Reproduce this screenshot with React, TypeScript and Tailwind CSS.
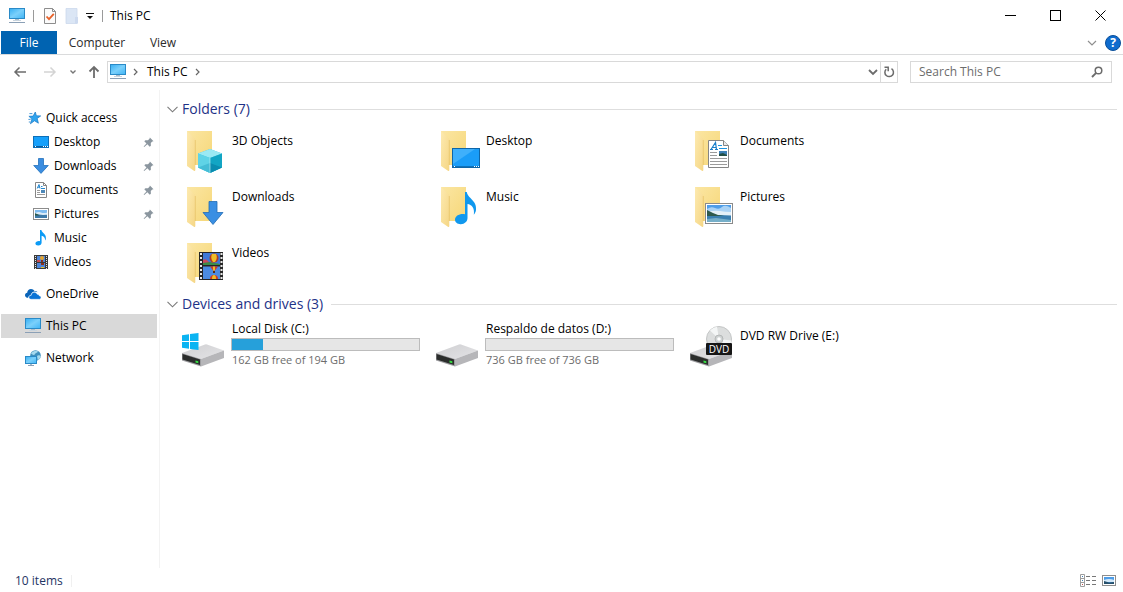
import React from 'react';

type IconProps = { className?: string };

interface NavItem {
  label: string;
  icon: React.FC<IconProps>;
  nested?: boolean;
  pinned?: boolean;
  active?: boolean;
  spaced?: boolean;
}

interface Drive {
  label: string;
  icon: React.FC<IconProps>;
  used?: number;
  detail?: string;
}

/* ---------- small icons (16px) ---------- */

const MonitorIcon: React.FC<IconProps> = ({ className }) => (
  <svg viewBox="0 0 16 16" className={className} aria-hidden="true">
    <defs>
      <linearGradient id="screen" x1="0" y1="0" x2="1" y2="1">
        <stop offset="0" stopColor="#35aef3" />
        <stop offset=".5" stopColor="#7bd0fb" />
        <stop offset="1" stopColor="#3fb4f5" />
      </linearGradient>
    </defs>
    <rect x="0.5" y="0.5" width="15" height="10" fill="url(#screen)" stroke="#2a8ac7" />
    <rect x="6" y="11" width="4" height="1" fill="#a9bccb" />
    <rect x="4" y="12" width="8" height="1" fill="#c8d4de" />
    <rect x="0" y="14" width="16" height="1" fill="#8ba0b6" />
  </svg>
);

const StarIcon: React.FC<IconProps> = ({ className }) => (
  <svg viewBox="0 0 16 16" className={className} aria-hidden="true">
    <path d="M10.3 2l1.1 3.800 4.300.1-3.500 2.600 1.200 4.700-3.900-2.400-4.100 3 1.500-4.700-3-2.800 4.200-.2z" fill="#2fa4ee" stroke="#1a79c6" strokeWidth=".7" />
    <path d="M4.4 3.600h3M3.400 9.400h2.200M3.800 12h1.600" stroke="#4b9ad6" strokeWidth="1" />
  </svg>
);

const DesktopIcon: React.FC<IconProps> = ({ className }) => (
  <svg viewBox="0 0 16 16" className={className} aria-hidden="true">
    <rect x="0.5" y="2.5" width="15" height="11" fill="#16a0fb" stroke="#0d6fb8" />
    <path d="M1 12.5h14" stroke="#0a5c9c" />
    <path d="M2 12.5h1M10 12.5h1M12 12.5h1M14 12.5h1" stroke="#fff" />
  </svg>
);

const DownloadIcon: React.FC<IconProps> = ({ className }) => (
  <svg viewBox="0 0 16 16" className={className} aria-hidden="true">
    <path d="M5.5.5h5v7h4.800L8 15.400.7 7.500h4.800z" fill="#3b8de0" stroke="#2372bd" strokeWidth=".8" />
  </svg>
);

const DocumentIcon: React.FC<IconProps> = ({ className }) => (
  <svg viewBox="0 0 16 16" className={className} aria-hidden="true">
    <path d="M2.500.500h8l3 3v12h-11z" fill="#fff" stroke="#868686" />
    <path d="M10.500.500v3h3" fill="none" stroke="#868686" />
    <path d="M4.200 6.500L6 2.500l1 4M4.800 5.200h2M8 4.500h1.500M8 6.500h4" stroke="#2487cf" fill="none" />
    <path d="M4 8.500h3M4 10.500h3M4 12.500h8" stroke="#9a9a9a" />
    <rect x="8" y="8" width="4" height="3" fill="#4c87b8" />
  </svg>
);

const PictureIcon: React.FC<IconProps> = ({ className }) => (
  <svg viewBox="0 0 16 16" className={className} aria-hidden="true">
    <rect x="0.5" y="2.5" width="15" height="11" fill="#fff" stroke="#8c8c8c" />
    <rect x="2" y="4" width="12" height="8" fill="#7fbcf0" />
    <path d="M2 7q4-1.500 6-.5t6 .2V9H2z" fill="#dcecf8" />
    <path d="M2 7.500l4 1 4 .6 4-.3V12H2z" fill="#3d79a8" />
    <path d="M2 7.200l5 2.200H2z" fill="#2d5b45" />
  </svg>
);

const MusicIcon: React.FC<IconProps> = ({ className }) => (
  <svg viewBox="0 0 16 16" className={className} aria-hidden="true">
    <path d="M7 0h1.400c.2 2.800 5 3.600 4.500 8.500-.1.9-.4 1.500-.8 2.100.3-2.700-1.500-4.300-3.500-4.800v6.900c0 1.500-1.300 2.800-3.300 2.900-1.700.1-2.900-.7-2.900-2 0-1.600 2.200-2.900 4.600-2.400z" fill="#0c9bf5" />
  </svg>
);

const VideoIcon: React.FC<IconProps> = ({ className }) => (
  <svg viewBox="0 0 16 16" className={className} aria-hidden="true">
    <rect x="1" y="1" width="14" height="14" fill="#3a3a3a" />
    <rect x="4" y="2" width="8" height="6" fill="#4f86d8" />
    <rect x="4" y="9" width="8" height="5" fill="#4f86d8" />
    <path d="M4 6h3v2H4z" fill="#c74a4e" />
    <circle cx="9" cy="4" r="2" fill="#e8a52c" />
    <path d="M8 6h2v2H8zM8 9h3v2H8z" fill="#8c2f1b" />
    <path d="M8 13h3v1H8z" fill="#e8c22c" />
    <path d="M2.500 2v13M13.500 2v13" stroke="#e6e6e6" strokeDasharray="1 1" />
  </svg>
);

const OneDriveIcon: React.FC<IconProps> = ({ className }) => (
  <svg viewBox="0 0 16 16" className={className} aria-hidden="true">
    <path d="M3.200 11.800C1.200 11.800 0 10.700 0 9.200c0-1.400 1-2.300 2.200-2.500C2.300 4.500 4 3 6 3c1.500 0 2.800.8 3.500 2 1.500-.2 2.500.3 3 1.200C9.500 4.800 6.500 6 6.100 8.700c-1.700.3-2.600 1.700-2.900 3.100z" fill="#0a64b8" />
    <path d="M6.200 13.300c-1.400 0-2.300-.9-2.300-2 0-1.200 1-2.100 2.300-2C6.300 7.500 7.600 6.300 9.200 6.300c1.300 0 2.400.7 2.900 1.900 1.300-.1 2 .7 2.100 1.600 1.100 0 1.800.7 1.800 1.700s-.8 1.800-1.900 1.800z" fill="#0a74d6" stroke="#fff" strokeWidth=".5" />
  </svg>
);

const NetworkIcon: React.FC<IconProps> = ({ className }) => (
  <svg viewBox="0 0 16 16" className={className} aria-hidden="true">
    <circle cx="10.500" cy="5.500" r="5.300" fill="#3f8fbd" />
    <path d="M6 3.500c2-3 5.500-3.500 7-2-.2 1.500-2.500 1-3 2.500S7.500 5 6 3.500zM12 6c1.500-1.500 3-.5 3.600 0-.2 2-1.300 3.500-2.800 4.300z" fill="#a6d9ee" />
    <rect x="0.500" y="6.500" width="11" height="7" fill="url(#screen)" stroke="#2a8ac7" />
    <path d="M3 15.500h6" stroke="#8ba0b6" />
    <path d="M6 14v1" stroke="#a9bccb" strokeWidth="2" />
  </svg>
);

const PinIcon: React.FC<IconProps> = ({ className }) => (
  <svg viewBox="0 0 12 12" className={className} aria-hidden="true">
    <path d="M7.500.500l4 4-1.400.4-1.600 1.700.1 2.900-1.300 1-2.500-2.500L1.300 11l-.6-.6L3.800 7.100 1.400 4.700l1.200-1.100 2.800-.1 1.700-1.700z" fill="#8b969f" />
  </svg>
);

/* ---------- folder tiles (48px) ---------- */

const Folder: React.FC<{ children: React.ReactNode }> = ({ children }) => (
  <svg viewBox="0 0 48 48" className="size-12 shrink-0" aria-hidden="true">
    <defs>
      <linearGradient id="folderBack" x1="0" y1="0" x2="1" y2="1">
        <stop offset="0" stopColor="#fbe6a3" />
        <stop offset="1" stopColor="#f6d778" />
      </linearGradient>
      <linearGradient id="folderFlap" x1="0" y1="0" x2="1" y2="1">
        <stop offset="0" stopColor="#fdeab0" />
        <stop offset="1" stopColor="#f5d685" />
      </linearGradient>
    </defs>
    <path d="M9 3h25v34H9z" fill="url(#folderBack)" />
    <path d="M9 3l7.500 7c.6.6.8 1.200.8 2v30c0 1-.6 1.400-1.400.8L9 38z" fill="url(#folderFlap)" />
    <path d="M17.300 12v25" stroke="#e5c065" strokeWidth=".7" />
    {children}
  </svg>
);

const CubeArt = () => (
  <>
    <path d="M32 21l12 4.500v14L32 45l-12-5.500v-14z" fill="#3ec4dd" />
    <path d="M32 21l12 4.500L32 30l-12-4.500z" fill="#9be9f3" />
    <path d="M20 25.500L32 30v15l-12-5.500z" fill="#5fd3e6" />
    <path d="M32 30l12-4.500v14L32 45z" fill="#12a5c4" />
    <path d="M20 39.500L32 35v10z" fill="#45bdd6" />
    <path d="M32 35l12 4.500L32 45z" fill="#0a8cb0" />
    <path d="M32 30v15" stroke="#c9f4fa" strokeWidth=".6" />
  </>
);

const DesktopArt = () => (
  <>
    <rect x="20.500" y="20.500" width="27" height="19" fill="#1a9df8" stroke="#0e66a8" />
    <path d="M21 36V21h22z" fill="#3fb0fb" />
    <path d="M21 38.500h26" stroke="#0e72ba" />
    <path d="M22 38.500h1M42 38.500h1M44 38.500h1M46 38.500h1" stroke="#fff" />
  </>
);

const DocumentArt = () => (
  <>
    <path d="M22.500 12.500h15l5 5v22h-20z" fill="#fff" stroke="#858585" />
    <path d="M37.500 12.500v5h5" fill="#e9e9e9" stroke="#858585" />
    <path d="M25 21.500l4.500-7 1 7M26.500 19.500h4M24 21.500h3M29 21.500h3" stroke="#1b7fc9" strokeWidth="1.200" fill="none" />
    <path d="M32 17.500h4M33 20.500h8" stroke="#1b94e0" />
    <path d="M24 24.500h7M24 27.500h7M24 30.500h17M24 33.500h17M24 36.500h17" stroke="#9b9b9b" />
    <rect x="33" y="23" width="8" height="5" fill="#3d7fb5" />
    <path d="M33 26l4-1 4 2v1h-8z" fill="#244f45" />
  </>
);

const DownloadArt = () => (
  <path d="M31 17.500h8v11h6L35 40.500l-10-12h6z" fill="#3a8fe3" stroke="#226cb5" strokeWidth=".8" />
);

const MusicArt = () => (
  <path d="M33 8h1.800c.5 6 10.500 8.500 9.200 18-.3 2-1 3.400-2.200 4.800C43 24 39.500 20.500 35.500 20v14c0 3.500-2.800 6-6.700 6.200-3.300.1-5.800-1.700-5.800-4.600 0-3.600 4.500-6.300 10-5.400z" fill="#1098ee" />
);

const PictureArt = () => (
  <>
    <rect x="19.500" y="19.500" width="27" height="20" fill="#fff" stroke="#8a8a8a" />
    <rect x="21" y="21" width="24" height="17" fill="#4e9de8" />
    <path d="M21 25q4-3 8-1t7-1 9 1v7H21z" fill="#a9d2f5" />
    <path d="M21 28q8-2 13-1t11 1v4H21z" fill="#e4f0f8" />
    <path d="M21 31.500l12-.5 12 .5V38H21z" fill="#3a7fb0" />
    <path d="M21 26l6 3 5 2 6 1H21z" fill="#2e5a4c" />
    <path d="M21 35l9-1 15 2v2H21z" fill="#76afc9" />
  </>
);

const VideoArt = () => (
  <>
    <rect x="21" y="12" width="24" height="28" fill="#262626" />
    <rect x="25" y="13" width="17" height="12" fill="#3f78d6" />
    <rect x="25" y="26.500" width="17" height="12.500" fill="#4b8be2" />
    <path d="M25 20q3-2 5 1t5 0v4H25z" fill="#c8485d" />
    <path d="M25 23l7-1 10 2v1H25z" fill="#3b8d48" />
    <circle cx="36" cy="18" r="4.500" fill="#b33b23" />
    <path d="M34 14q-2 4 1 8h2q3-4 1-8z" fill="#f0bd25" />
    <path d="M32 26.500h8l-3 4h-2z" fill="#cf3d25" />
    <path d="M35 26.500h2v4h-2z" fill="#f0bd25" />
    <path d="M35 31h2v2h-2z" fill="#522a16" />
    <path d="M32 39q0-4 4-4t4 4z" fill="#cf3d25" />
    <path d="M34 39q0-4 2-4t2 4z" fill="#f0bd25" />
    <path d="M23 13v27M43.500 13v27" stroke="#e8e8e8" strokeWidth="2" strokeDasharray="2 2" />
  </>
);

/* ---------- drives (48px) ---------- */

const DriveBody = () => (
  <>
    <defs>
      <linearGradient id="driveTop" x1="0" y1="0" x2="1" y2="1">
        <stop offset="0" stopColor="#cfcfd2" />
        <stop offset="1" stopColor="#e4e4e6" />
      </linearGradient>
    </defs>
    <path d="M4 31l23-8.500q1-.4 2 0l17 6L23 37z" fill="url(#driveTop)" />
    <path d="M23 37l23-8.500v7.500l-23 8.500z" fill="#b6b6b9" />
    <path d="M4 31l19 6v7.500L4 38.500z" fill="#9c9c9f" />
    <path d="M4.500 32l17.500 5.400v5.600L4.500 37.600z" fill="#2b2d2c" />
    <path d="M17.500 38.400l2.800.8v2l-2.800-.8z" fill="#37e043" />
  </>
);

const SystemDriveIcon: React.FC<IconProps> = ({ className }) => (
  <svg viewBox="0 0 48 48" className={className} aria-hidden="true">
    <DriveBody />
    <path d="M4 13.300l7-1v6.700H4zM12 12.100l8.500-1.200V19H12zM4 20h7v6.700l-7-1zM12 20h8.500v8.100L12 26.900z" fill="#0bb4f2" />
  </svg>
);

const DataDriveIcon: React.FC<IconProps> = ({ className }) => (
  <svg viewBox="0 0 48 48" className={className} aria-hidden="true">
    <DriveBody />
  </svg>
);

const DvdDriveIcon: React.FC<IconProps> = ({ className }) => (
  <svg viewBox="0 0 48 48" className={className} aria-hidden="true">
    <DriveBody />
    <circle cx="33" cy="17" r="12.500" fill="#dcdede" stroke="#c4c6c6" />
    <path d="M33 17L24 8.500A12.500 12.500 0 0 1 31 4.700zM33 17l9 8.500a12.500 12.500 0 0 0 3.300-7z" fill="#f4f6f6" />
    <circle cx="33" cy="17" r="4" fill="#cfd3d3" stroke="#b5b8b8" />
    <circle cx="33" cy="17" r="1.800" fill="#fff" />
    <rect x="20" y="21" width="26" height="12" rx="1" fill="#161616" />
    <text x="33" y="31" textAnchor="middle" fontSize="10" fill="#fff" fontFamily="Open Sans, sans-serif">DVD</text>
  </svg>
);

/* ---------- data ---------- */

const navItems: NavItem[] = [
  { label: 'Quick access', icon: StarIcon },
  { label: 'Desktop', icon: DesktopIcon, nested: true, pinned: true },
  { label: 'Downloads', icon: DownloadIcon, nested: true, pinned: true },
  { label: 'Documents', icon: DocumentIcon, nested: true, pinned: true },
  { label: 'Pictures', icon: PictureIcon, nested: true, pinned: true },
  { label: 'Music', icon: MusicIcon, nested: true },
  { label: 'Videos', icon: VideoIcon, nested: true },
  { label: 'OneDrive', icon: OneDriveIcon, spaced: true },
  { label: 'This PC', icon: MonitorIcon, spaced: true, active: true },
  { label: 'Network', icon: NetworkIcon, spaced: true },
];

const folders = [
  { label: '3D Objects', art: CubeArt },
  { label: 'Desktop', art: DesktopArt },
  { label: 'Documents', art: DocumentArt },
  { label: 'Downloads', art: DownloadArt },
  { label: 'Music', art: MusicArt },
  { label: 'Pictures', art: PictureArt },
  { label: 'Videos', art: VideoArt },
];

const drives: Drive[] = [
  { label: 'Local Disk (C:)', icon: SystemDriveIcon, used: 16.5, detail: '162 GB free of 194 GB' },
  { label: 'Respaldo de datos (D:)', icon: DataDriveIcon, used: 0, detail: '736 GB free of 736 GB' },
  { label: 'DVD RW Drive (E:)', icon: DvdDriveIcon },
];

/* ---------- window parts ---------- */

const TitleBar = () => (
  <header className="flex h-[31px] items-center pl-[9px]">
    <MonitorIcon className="size-4" />
    <span className="ml-2 h-3 w-px bg-[#9a9a9a]" />
    <button type="button" aria-label="Properties" className="ml-2">
      <svg viewBox="0 0 16 16" className="size-4" aria-hidden="true">
        <path d="M2.500.500h8l3 3v12h-11z" fill="#fbfbfb" stroke="#8d8d8d" />
        <path d="M10.500.500v3h3" fill="none" stroke="#8d8d8d" />
        <path d="M4.500 8.500l2.500 2.700 4.800-5.400" fill="none" stroke="#e8622a" strokeWidth="1.800" />
      </svg>
    </button>
    <button type="button" aria-label="New folder" className="ml-[6px]">
      <svg viewBox="0 0 16 16" className="size-4" aria-hidden="true">
        <path d="M2 .500h11v15H2z" fill="#dbe6f5" stroke="#cbd8ec" strokeWidth=".8" />
        <path d="M11 9h3v6.500h-3z" fill="#cddaef" />
      </svg>
    </button>
    <button type="button" aria-label="Customize Quick Access Toolbar" className="ml-[6px]">
      <svg viewBox="0 0 8 8" className="size-2" aria-hidden="true">
        <path d="M0 1.500h8" stroke="#111" />
        <path d="M1 4h6L4 7z" fill="#111" />
      </svg>
    </button>
    <span className="ml-2 h-3 w-px bg-[#9a9a9a]" />
    <h1 className="ml-[7px] leading-4">This PC</h1>
    <div className="ml-auto flex">
      <button type="button" aria-label="Minimize" className="flex h-[31px] w-[46px] items-center justify-center">
        <svg viewBox="0 0 11 11" className="size-[11px]" aria-hidden="true">
          <path d="M0 5.500h11" stroke="#000" />
        </svg>
      </button>
      <button type="button" aria-label="Maximize" className="flex h-[31px] w-[45px] items-center justify-center">
        <svg viewBox="0 0 11 11" className="size-[11px]" aria-hidden="true">
          <rect x="0.500" y="0.500" width="10" height="10" fill="none" stroke="#000" />
        </svg>
      </button>
      <button type="button" aria-label="Close" className="flex h-[31px] w-[45px] items-center justify-center">
        <svg viewBox="0 0 11 11" className="size-[11px]" aria-hidden="true">
          <path d="M.500.500l10 10M10.500.500l-10 10" stroke="#000" />
        </svg>
      </button>
    </div>
  </header>
);

const Ribbon = () => (
  <div className="flex h-6 items-center border-b border-[#dadbdc] pl-px">
    <button type="button" className="h-[23px] w-14 bg-[#0063b1] text-white">File</button>
    <button type="button" className="w-20 text-[#2b2b2b]">Computer</button>
    <button type="button" className="w-[52px] text-[#2b2b2b]">View</button>
    <button type="button" aria-label="Expand the Ribbon" className="ml-auto">
      <svg viewBox="0 0 10 6" className="h-[6px] w-[10px]" aria-hidden="true">
        <path d="M1 1l4 4 4-4" fill="none" stroke="#8f8f8f" strokeWidth="1.200" />
      </svg>
    </button>
    <button type="button" aria-label="Help" className="mr-0.5 ml-2 flex size-4 items-center justify-center rounded-full border border-[#0a4f9a] bg-[#0f6cce] text-xs leading-4 font-bold text-white">
      ?
    </button>
  </div>
);

const Crumb = () => (
  <svg viewBox="0 0 5 8" className="h-2 w-[5px]" aria-hidden="true">
    <path d="M1 1l3 3-3 3" fill="none" stroke="#666" strokeWidth="1.200" />
  </svg>
);

const AddressRow = () => (
  <div className="flex items-center pt-[6px] pr-[11px] pl-[13px]">
    <button type="button" aria-label="Back">
      <svg viewBox="0 0 14 14" className="size-[14px]" aria-hidden="true">
        <path d="M13 7H2M6.500 2.500L2 7l4.500 4.500" fill="none" stroke="#6c6c6c" strokeWidth="1.500" />
      </svg>
    </button>
    <button type="button" aria-label="Forward" className="ml-4">
      <svg viewBox="0 0 14 14" className="size-[14px]" aria-hidden="true">
        <path d="M1 7h11M7.500 2.500L12 7l-4.500 4.500" fill="none" stroke="#d4d4d4" strokeWidth="1.500" />
      </svg>
    </button>
    <button type="button" aria-label="Recent locations" className="ml-[13px]">
      <svg viewBox="0 0 6 6" className="size-[6px]" aria-hidden="true">
        <path d="M.500 1.500L3 4l2.500-2.500" fill="none" stroke="#777" strokeWidth="1.400" />
      </svg>
    </button>
    <button type="button" aria-label="Up" className="ml-[11px]">
      <svg viewBox="0 0 14 14" className="size-[14px]" aria-hidden="true">
        <path d="M7 13V2M2.500 6.500L7 2l4.500 4.500" fill="none" stroke="#6c6c6c" strokeWidth="1.800" />
      </svg>
    </button>
    <div className="ml-[6px] flex h-[22px] grow items-center border border-[#d9d9d9]">
      <MonitorIcon className="ml-0.5 size-4" />
      <span className="ml-[7px]"><Crumb /></span>
      <button type="button" className="ml-[9px]">This PC</button>
      <span className="ml-[7px]"><Crumb /></span>
      <button type="button" aria-label="Previous locations" className="ml-auto flex h-5 w-4 items-center justify-center border-r border-[#d9d9d9]">
        <svg viewBox="0 0 10 7" className="h-[7px] w-[10px]" aria-hidden="true">
          <path d="M1 1l4 4 4-4" fill="none" stroke="#6c6c6c" strokeWidth="1.800" />
        </svg>
      </button>
      <button type="button" aria-label="Refresh" className="flex w-4 justify-center">
        <svg viewBox="0 0 12 12" className="size-3" aria-hidden="true">
          <path d="M8.500 2.700A4.300 4.300 0 1 1 3.200 3.200" fill="none" stroke="#6c6c6c" strokeWidth="1.500" />
          <path d="M1.500 1.200h3.700v4" fill="none" stroke="#6c6c6c" strokeWidth="1.500" />
        </svg>
      </button>
    </div>
    <div className="ml-3 flex h-[22px] w-[202px] items-center border border-[#d9d9d9] px-2">
      <input type="search" aria-label="Search This PC" placeholder="Search This PC" className="w-0 grow outline-none placeholder:text-[#6d6d6d]" />
      <svg viewBox="0 0 12 12" className="size-3" aria-hidden="true">
        <circle cx="7.500" cy="4.500" r="3.300" fill="none" stroke="#6c6c6c" strokeWidth="1.500" />
        <path d="M5.200 6.800L1 11" stroke="#6c6c6c" strokeWidth="1.900" />
      </svg>
    </div>
  </div>
);

const Sidebar = () => (
  <nav aria-label="Navigation pane" className="w-40 shrink-0 border-r border-[#f3f3f3] pt-4 pr-[2px] pl-px">
    <ul>
      {navItems.map(({ label, icon: Icon, nested, pinned, active, spaced }) => (
        <li key={label} className={spaced ? 'mt-2' : ''}>
          <button
            type="button"
            className={`flex h-6 w-full items-center gap-[5px] pr-[3px] text-left ${nested ? 'pl-8' : 'pl-6'} ${active ? 'bg-[#d9d9d9]' : ''}`}
          >
            <Icon className="size-4 shrink-0" />
            <span>{label}</span>
            {pinned && <PinIcon className="ml-auto size-[11px]" />}
          </button>
        </li>
      ))}
    </ul>
  </nav>
);

const GroupHeader: React.FC<{ title: string }> = ({ title }) => (
  <div className="flex items-center">
    <button type="button" className="flex items-center gap-1 text-sm leading-5 text-[#1e3287]">
      <svg viewBox="0 0 11 7" className="h-[7px] w-[11px]" aria-hidden="true">
        <path d="M.500.800l5 5 5-5" fill="none" stroke="#7a7a7a" strokeWidth="1.100" />
      </svg>
      {title}
    </button>
    <span className="ml-2 h-px grow bg-[#dedede]" />
  </div>
);

const App: React.FC = () => {
  return (
    <div className="flex min-h-screen flex-col bg-white font-['Open_Sans','Noto_Sans',sans-serif] text-xs leading-4 text-black">
      <TitleBar />
      <Ribbon />
      <AddressRow />

      <div className="mt-[7px] flex grow">
        <Sidebar />

        <main className="grow pt-[9px] pr-[6px] pl-[7px]">
          <section className="pb-[6px]">
            <GroupHeader title="Folders (7)" />
            <ul className="grid grid-cols-[repeat(auto-fill,254px)] gap-y-2 pt-[9px] pl-[11px]">
              {folders.map(({ label, art: Art }) => (
                <li key={label}>
                  <button type="button" className="flex w-full items-start gap-[6px] text-left">
                    <Folder><Art /></Folder>
                    <span className="pt-[5px]">{label}</span>
                  </button>
                </li>
              ))}
            </ul>
          </section>

          <section>
            <GroupHeader title="Devices and drives (3)" />
            <ul className="grid grid-cols-[repeat(auto-fill,254px)] pt-2 pl-[11px]">
              {drives.map(({ label, icon: Icon, used, detail }) => (
                <li key={label}>
                  <button type="button" className="flex w-full items-start text-left">
                    <Icon className="size-12 shrink-0" />
                    {detail ? (
                      <span className="ml-[5px] w-[189px]">
                        <span className="block pb-0.5 pl-px leading-[14px]">{label}</span>
                        <span
                          role="progressbar"
                          aria-label={`${label} space used`}
                          aria-valuenow={used}
                          className="block h-[13px] border border-[#bcbcbc] bg-[#e6e6e6]"
                        >
                          <span className="block h-full bg-[#26a0da]" style={{ width: `${used}%` }} />
                        </span>
                        <span className="block pt-px pl-px text-[11px] text-[#6d6d6d]">{detail}</span>
                      </span>
                    ) : (
                      <span className="pt-[6px] pl-[6px]">{label}</span>
                    )}
                  </button>
                </li>
              ))}
            </ul>
          </section>
        </main>
      </div>

      <footer className="flex h-6 items-center pt-0.5 pr-[7px] pl-[15px] text-[#1f3564]">
        <span>10 items</span>
        <span className="ml-2 h-3 w-px bg-[#f0f0f0]" />
        <button type="button" aria-label="Details view" className="ml-auto">
          <svg viewBox="0 0 16 14" className="h-[14px] w-4" aria-hidden="true">
            <path d="M.500.500h4v12h-4zM.500 4.500h4M.500 8.500h4" fill="#fff" stroke="#9d9d9d" />
            <path d="M2 2.500h1M2 6.500h1" stroke="#3d7fb5" />
            <path d="M2 10.500h1" stroke="#c0504d" />
            <path d="M6 2.500h4M12 2.500h4M6 6.500h4M12 6.500h4M6 10.500h4M12 10.500h4" stroke="#777" />
          </svg>
        </button>
        <button type="button" aria-label="Large icons view" className="ml-[6px]">
          <svg viewBox="0 0 14 12" className="h-3 w-[14px]" aria-hidden="true">
            <rect x="0.500" y="0.500" width="13" height="10" fill="#fff" stroke="#8d8d8d" />
            <rect x="2" y="2" width="10" height="7" fill="#4e9de8" />
            <path d="M2 5q5-2 10 0v2H2z" fill="#d3e8f8" />
            <path d="M2 6l5 1.500 5-.500v2H2z" fill="#26506b" />
          </svg>
        </button>
      </footer>
    </div>
  );
};

export default App;
